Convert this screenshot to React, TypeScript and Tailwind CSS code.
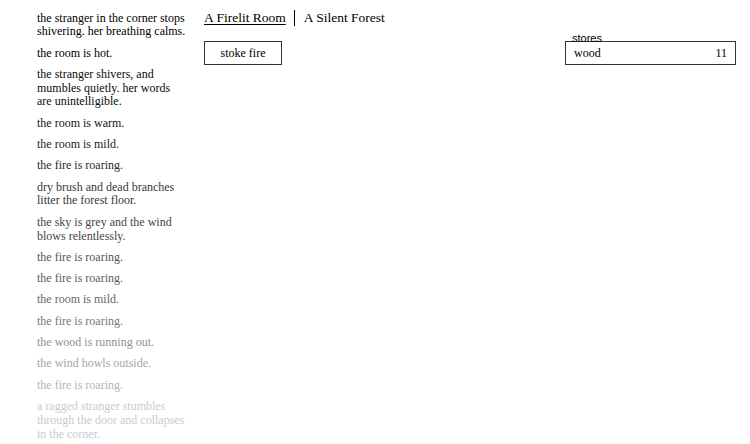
const notifications: { text: string; color: string }[] = [
  { text: "the stranger in the corner stops shivering. her breathing calms.", color: "text-[#000000]" },
  { text: "the room is hot.", color: "text-[#000000]" },
  { text: "the stranger shivers, and mumbles quietly. her words are unintelligible.", color: "text-[#0a0a0a]" },
  { text: "the room is warm.", color: "text-[#141414]" },
  { text: "the room is mild.", color: "text-[#1e1e1e]" },
  { text: "the fire is roaring.", color: "text-[#2a2a2a]" },
  { text: "dry brush and dead branches litter the forest floor.", color: "text-[#383838]" },
  { text: "the sky is grey and the wind blows relentlessly.", color: "text-[#464646]" },
  { text: "the fire is roaring.", color: "text-[#545454]" },
  { text: "the fire is roaring.", color: "text-[#5e5e5e]" },
  { text: "the room is mild.", color: "text-[#686868]" },
  { text: "the fire is roaring.", color: "text-[#787878]" },
  { text: "the wood is running out.", color: "text-[#929292]" },
  { text: "the wind howls outside.", color: "text-[#a6a6a6]" },
  { text: "the fire is roaring.", color: "text-[#b6b6b6]" },
  { text: "a ragged stranger stumbles through the door and collapses in the corner.", color: "text-[#cbcbcb]" },
];

const Notifications = () => (
  <div className="w-[150px] shrink-0 ml-[37px] pt-[11.5px] h-[444px] overflow-hidden">
    {notifications.map((n, i) => (
      <div key={i} className={`mb-[7.5px] text-[12px] leading-[13.8px] ${n.color}`}>
        {n.text}
      </div>
    ))}
  </div>
);

const Stores = () => (
  <div className="relative w-[171px] mt-[41px] mr-[14px] border border-[#333] h-[24px]">
    <div className="absolute left-[6px] -top-[9px] text-[11px] leading-[11px] text-black font-['Liberation_Sans',Arial,sans-serif]">
      stores
    </div>
    <div className="flex justify-between pl-[8px] pr-[8px] pt-[4.5px] text-[12px] leading-[13.8px] text-black">
      <span>wood</span>
      <span>11</span>
    </div>
  </div>
);

export default function App() {
  return (
    <div className="w-[750px] h-[444px] bg-white overflow-hidden flex font-['Liberation_Serif','Times_New_Roman',serif] text-black">
      <Notifications />
      <div className="flex-1 ml-[17px] pt-[10px]">
        {/* header */}
        <div className="flex text-[13.5px] leading-[15.5px]">
          <div className="pr-[8px] underline underline-offset-2 cursor-pointer">A Firelit Room</div>
          <div className="pl-[9px] border-l border-black cursor-pointer">A Silent Forest</div>
        </div>
        <div className="mt-[15px] w-[78px] h-[24px] border border-[#333] flex items-center justify-center text-[12px] cursor-pointer">
          stoke fire
        </div>
      </div>
      <Stores />
    </div>
  );
}
